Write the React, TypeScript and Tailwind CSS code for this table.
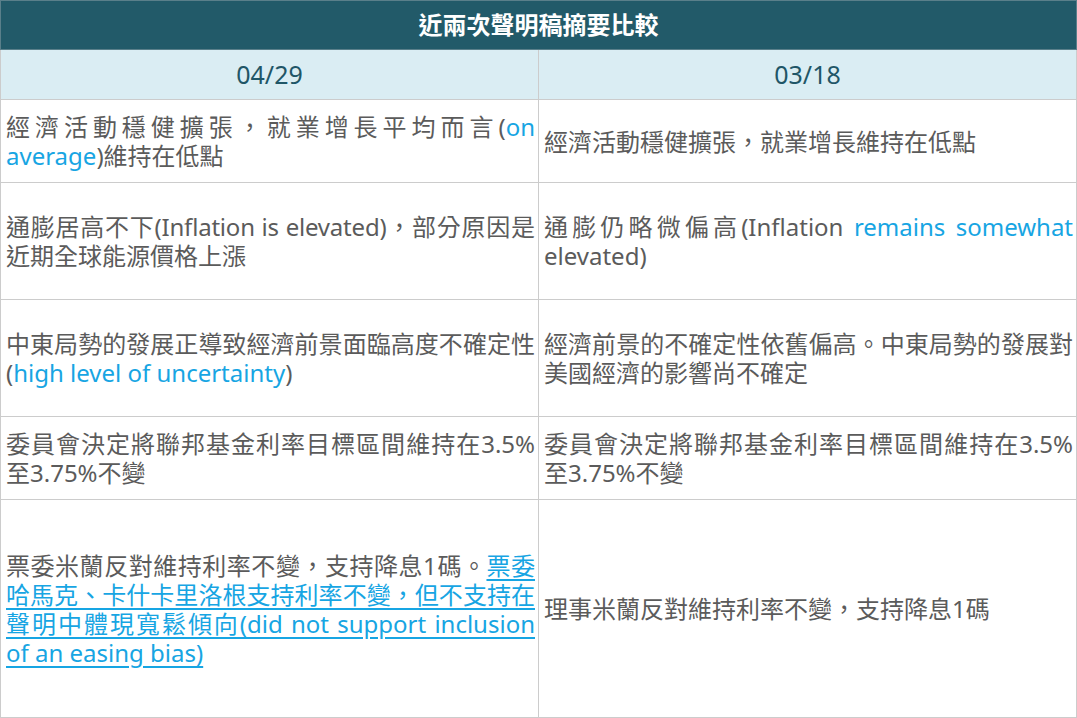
import React from 'react';

const FONT = "font-['Noto_Sans','Noto_Sans_CJK_TC',sans-serif]";

type Row = { h: string; left: React.ReactNode; right: React.ReactNode };

const Blue: React.FC<{ children: React.ReactNode; u?: boolean }> = ({ children, u }) => (
  <span className={u ? 'text-[#17a5e3] underline underline-offset-[4px]' : 'text-[#17a5e3]'}>{children}</span>
);

const ROWS: Row[] = [
  {
    h: 'h-[83px]',
    left: (
      <>
        經濟活動穩健擴張，就業增長平均而言(<Blue>on average</Blue>)維持在低點
      </>
    ),
    right: <>經濟活動穩健擴張，就業增長維持在低點</>,
  },
  {
    h: 'h-[117px]',
    left: (
      <>
        通膨居高不下<span className="tracking-[-0.2px]">(Inflation is elevated)</span>，部分原因是近期全球能源價格上漲
      </>
    ),
    right: (
      <>
        通膨仍略微偏高(Inflation <Blue>remains somewhat</Blue> elevated)
      </>
    ),
  },
  {
    h: 'h-[117px]',
    left: (
      <>
        中東局勢的發展正導致經濟前景面臨高度不確定性(<Blue>high level of uncertainty</Blue>)
      </>
    ),
    right: <>經濟前景的不確定性依舊偏高。中東局勢的發展對美國經濟的影響尚不確定</>,
  },
  {
    h: 'h-[83px]',
    left: <>委員會決定將聯邦基金利率目標區間維持在3.5%至3.75%不變</>,
    right: <>委員會決定將聯邦基金利率目標區間維持在3.5%至3.75%不變</>,
  },
  {
    h: 'h-[218px]',
    left: (
      <>
        票委米蘭反對維持利率不變，支持降息1碼。
        <Blue u>票委哈馬克、卡什卡里洛根支持利率不變，但不支持在聲明中體現寬鬆傾向(did not support inclusion of an easing bias)</Blue>
      </>
    ),
    right: <>理事米蘭反對維持利率不變，支持降息1碼</>,
  },
];

const cell = 'border border-[#cccccc] pl-[5px] pr-[3px] align-middle text-justify text-[24px] leading-[29px] text-[#5b5b5b]';

export default function App() {
  return (
    <div lang="zh-TW" className={`${FONT} w-[1077px] bg-white`}>
      <table className="w-full table-fixed border-collapse">
        <thead>
          <tr className="h-[49px] bg-[#225a69]">
            <th colSpan={2} className="border border-[#5a7f8a] text-center text-[24px] font-bold text-white">
              近兩次聲明稿摘要比較
            </th>
          </tr>
          <tr className="h-[50px] bg-[#daedf3]">
            <th className="w-[538px] border border-[#cccccc] text-center text-[25px] font-normal text-[#1f5667]">04/29</th>
            <th className="border border-[#cccccc] text-center text-[25px] font-normal text-[#1f5667]">03/18</th>
          </tr>
        </thead>
        <tbody>
          {ROWS.map((r, i) => (
            <tr key={i} className={r.h}>
              <td className={cell}>{r.left}</td>
              <td className={cell}>{r.right}</td>
            </tr>
          ))}
        </tbody>
      </table>
    </div>
  );
}
